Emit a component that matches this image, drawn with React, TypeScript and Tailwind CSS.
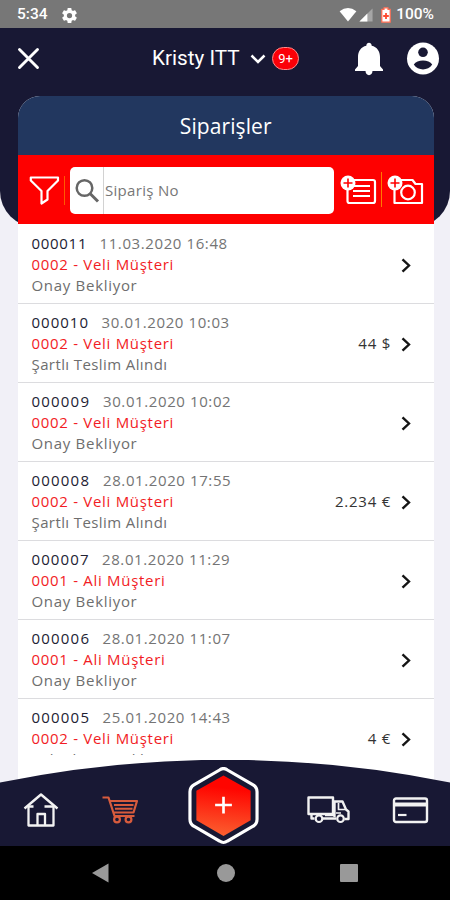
import type { ReactNode } from 'react';

interface Order {
    id: string;
    idClass: string;
    date: string;
    customer: string;
    status: string;
    statusClass: string;
    amount?: string;
}

const orders: Order[] = [
    {
        id: '000011',
        idClass: 'w-[68px] tracking-[0.7px]',
        date: '11.03.2020 16:48',
        customer: '0002 - Veli Müşteri',
        status: 'Onay Bekliyor',
        statusClass: 'tracking-[0.7px]'
    },
    {
        id: '000010',
        idClass: 'w-[70px] tracking-[1px]',
        date: '30.01.2020 10:03',
        customer: '0002 - Veli Müşteri',
        status: 'Şartlı Teslim Alındı',
        statusClass: 'tracking-[0.4px]',
        amount: '44 $'
    },
    {
        id: '000009',
        idClass: 'w-[71.5px] tracking-[1.2px]',
        date: '30.01.2020 10:02',
        customer: '0002 - Veli Müşteri',
        status: 'Onay Bekliyor',
        statusClass: 'tracking-[0.7px]'
    },
    {
        id: '000008',
        idClass: 'w-[71.5px] tracking-[1.2px]',
        date: '28.01.2020 17:55',
        customer: '0002 - Veli Müşteri',
        status: 'Şartlı Teslim Alındı',
        statusClass: 'tracking-[0.4px]',
        amount: '2.234 €'
    },
    {
        id: '000007',
        idClass: 'w-[70.5px] tracking-[1.1px]',
        date: '28.01.2020 11:29',
        customer: '0001 - Ali Müşteri',
        status: 'Onay Bekliyor',
        statusClass: 'tracking-[0.7px]'
    },
    {
        id: '000006',
        idClass: 'w-[71px] tracking-[1.2px]',
        date: '28.01.2020 11:07',
        customer: '0001 - Ali Müşteri',
        status: 'Onay Bekliyor',
        statusClass: 'tracking-[0.7px]'
    },
    {
        id: '000005',
        idClass: 'w-[71px] tracking-[1.2px]',
        date: '25.01.2020 14:43',
        customer: '0002 - Veli Müşteri',
        status: 'Paketleme Bekliyor',
        statusClass: 'tracking-[0.4px]',
        amount: '4 €'
    }
];

function StatusBar() {
    return (
        <div className="flex h-7 shrink-0 items-center justify-between bg-[#777777] pl-[17px] pr-4 font-['Roboto',sans-serif] text-[15.5px] font-medium text-white">
            <div className="flex items-center gap-[14px] pt-[2px]">
                <span>5:34</span>
                <svg className="h-[15px] w-[15px]" viewBox="2 2 20 20" fill="currentColor">
                    <path d="M19.43 12.98c.04-.32.07-.64.07-.98s-.03-.66-.07-.98l2.11-1.65c.19-.15.24-.42.12-.64l-2-3.46c-.12-.22-.39-.3-.61-.22l-2.49 1c-.52-.4-1.08-.73-1.69-.98l-.38-2.65A.49.49 0 0 0 14 2h-4c-.25 0-.46.18-.49.42l-.38 2.65c-.61.25-1.17.59-1.69.98l-2.49-1c-.23-.09-.49 0-.61.22l-2 3.46c-.13.22-.07.49.12.64l2.11 1.65c-.04.32-.07.65-.07.98s.03.66.07.98l-2.11 1.65c-.19.15-.24.42-.12.64l2 3.46c.12.22.39.3.61.22l2.49-1c.52.4 1.08.73 1.69.98l.38 2.65c.03.24.24.42.49.42h4c.25 0 .46-.18.49-.42l.38-2.65c.61-.25 1.17-.59 1.69-.98l2.49 1c.23.09.49 0 .61-.22l2-3.46c.12-.22.07-.49-.12-.64l-2.11-1.65zM12 15.5a3.5 3.5 0 1 1 0-7 3.5 3.5 0 0 1 0 7z" />
                </svg>
            </div>
            <div className="flex items-center pt-[2px]">
                <svg className="h-[14px] w-[18px]" viewBox="0 0 18 15" fill="currentColor">
                    <path d="M0 3.5Q9-3.3 18 3.5L9 14.5Z" />
                </svg>
                <svg className="ml-[2px] h-[14px] w-[14px]" viewBox="0 0 15 15" fill="currentColor">
                    <path d="M14.5.5V14.5H.5Z" opacity=".35" />
                    <path d="M9 6V14.5H.5Z" />
                </svg>
                <svg className="ml-[8px] h-4 w-[10px]" viewBox="0 0 10 16">
                    <path d="M3 .8h4v1.5h2.2v12.9H.8V2.3H3Z" fill="#fff" stroke="#ff6b51" strokeWidth="1.2" />
                    <path d="M5 6v6M2.2 9h5.6" stroke="#ff4a30" strokeWidth="1.8" />
                </svg>
                <span className="ml-[5px]">100%</span>
            </div>
        </div>
    );
}

function TopBar() {
    return (
        <div className="flex h-[68px] items-start pl-[17px] pr-[10px] pt-[14px] text-white">
            <svg className="mt-[5px] h-[23px] w-[23px]" viewBox="0 0 23 23" fill="none" stroke="currentColor" strokeWidth="2.9" strokeLinecap="round">
                <path d="M2.5 2.5l18 18M20.5 2.5l-18 18" />
            </svg>
            <div className="ml-[112px] mt-[2px] flex h-[29px] items-center">
                <span className="w-[91px] whitespace-nowrap pt-px font-['Roboto',sans-serif] text-[20.7px]">
                    Kristy ITT
                </span>
                <svg className="ml-[7px] h-[10px] w-4" viewBox="0 0 16 10" fill="none" stroke="currentColor" strokeWidth="2.5">
                    <path d="M1.5 1.5L8 8l6.5-6.5" />
                </svg>
                <span className="ml-[6px] flex h-[23px] w-[27px] items-center justify-center rounded-full border border-[#ff8a8a] bg-[#fb0007] font-['Roboto',sans-serif] text-[13px]">
                    9+
                </span>
            </div>
            <svg className="ml-auto h-[34px] w-[30px]" viewBox="0 0 30 34" fill="currentColor">
                <path d="M12.3 3.7C12.3-.2 17.7-.2 17.7 3.7 23 5 26 9 26 15v9l3 3.5v1.5H1v-1.5L4 24v-9C4 9 7 5 12.3 3.7ZM11.5 29h7c0 5.500-7 5.500-7 0Z" />
            </svg>
            <svg className="ml-[22px] h-[34px] w-[34px]" viewBox="0 0 34 34">
                <circle cx="17" cy="16.5" r="16" fill="#fff" />
                <circle cx="17" cy="10.3" r="4.8" fill="#181834" />
                <path d="M7.8 22.5C11 17 23 17 26.2 22.5 22 29 12 29 7.8 22.5Z" fill="#181834" />
            </svg>
        </div>
    );
}

function PlusDot() {
    return (
        <g>
            <circle cx="8" cy="8" r="7.5" fill="#fff" stroke="none" />
            <path d="M8 3.5v9M3.5 8h9" stroke="#f00" strokeWidth="1.6" />
        </g>
    );
}

function SearchBar() {
    return (
        <div className="flex h-[69px] shrink-0 items-start bg-[#fe0000] pl-[11px] pt-3">
            <svg className="mt-[8px] h-[31px] w-[31px]" viewBox="0 0 31 31" fill="none" stroke="#fff" strokeWidth="2.2" strokeLinejoin="round">
                <path d="M1.8 2.5H29v3L18.5 16v8.5l-6 4V16L1.8 5.5Z" />
            </svg>
            <div className="ml-[4px] mt-[9px] h-[29px] w-[1.5px] bg-[#ff5a00]" />
            <div className="ml-[5px] flex h-[47px] w-[264px] items-center rounded-[5px] bg-white">
                <div className="flex h-full w-[34px] items-center justify-center border-r border-[#d2d2d2]">
                    <svg className="h-[26px] w-[26px]" viewBox="0 0 26 26" fill="none" stroke="#666" strokeWidth="2.5">
                        <circle cx="10.5" cy="10" r="7.8" />
                        <path d="M16 15.5l8 8" strokeWidth="3" />
                    </svg>
                </div>
                <span className="pl-px text-[15px] tracking-[0.3px] text-[#777]">
                    Sipariş No
                </span>
            </div>
            <svg className="ml-[6px] mt-[8px] h-[30px] w-[37px]" viewBox="0 0 37 30" fill="none" stroke="#fff">
                <rect x="7.5" y="5" width="27.5" height="23" rx="2" strokeWidth="2.2" />
                <path d="M14 11h16M13 16h17M13 21h17" strokeWidth="2" />
                <PlusDot />
            </svg>
            <div className="ml-[4px] mt-[5px] h-[35px] w-px bg-[#ff7a00]" />
            <svg className="ml-[5px] mt-[8px] h-[30px] w-[37px]" viewBox="0 0 37 30" fill="none" stroke="#fff">
                <path d="M7.5 28V5h18l3 4h6.5v19Z" strokeWidth="2.2" strokeLinejoin="round" />
                <circle cx="21" cy="17.5" r="6.8" strokeWidth="2.2" />
                <PlusDot />
            </svg>
        </div>
    );
}

function OrderRow({ order }: { order: Order }) {
    return (
        <li className="flex h-[79.1px] shrink-0 items-start justify-between border-b border-[#dcdcdf] pl-[14px] pr-[23px] pt-[8px] text-[15px] leading-[21px]">
            <div className="whitespace-nowrap">
                <p className="flex">
                    <span className={`font-medium text-[#222233] ${order.idClass}`}>{order.id}</span>
                    <span className="tracking-[0.6px] text-[#747474]">{order.date}</span>
                </p>
                <p className="font-medium tracking-[0.7px] text-[#f21c25]">{order.customer}</p>
                <p className={`text-[#6e6e6e] ${order.statusClass}`}>{order.status}</p>
            </div>
            <div className="flex h-[42px] items-end text-[#333]">
                <span className="tracking-[0.75px]">{order.amount}</span>
                <svg className="mb-[2px] ml-[10px] h-[15px] w-[10px]" viewBox="0 0 10 15" fill="none" stroke="#151515" strokeWidth="2.4">
                    <path d="M1.5 1.3L8 7.5 1.5 13.7" />
                </svg>
            </div>
        </li>
    );
}

function NavIcon({ className, viewBox, children }: { className: string; viewBox: string; children: ReactNode }) {
    return (
        <svg className={className} viewBox={viewBox} fill="none" stroke="#f2f2f2" strokeWidth="2.2" strokeLinejoin="round">
            {children}
        </svg>
    );
}

function BottomNav() {
    return (
        <nav className="absolute inset-x-0 bottom-0 h-[86px]">
            {/* Curved background */}
            <svg className="absolute inset-0 h-full w-full" viewBox="0 0 450 86" preserveAspectRatio="none">
                <path d="M0 22.5Q225-23 450 22.5V86H0Z" fill="#181834" />
            </svg>
            <div className="relative flex h-full items-start pl-[23px] pt-[7px]">
                <NavIcon className="mt-[25px] h-[36px] w-[36px]" viewBox="0 0 36 36">
                    <path d="M1.5 16.5L18 2.5l16.5 14" strokeWidth="2.4" />
                    <path d="M5.5 14v19.5h25V14M14.5 33V22H22v11M5.5 14.5h5M30.5 14.500h-9" strokeWidth="2.3" />
                </NavIcon>
                <NavIcon className="ml-[43px] mt-[28px] h-[29px] w-[37px]" viewBox="0 0 37 29">
                    <g stroke="#d75b3d">
                        <path d="M.5 2.500h6L12.500 21H32.500M8.500 6H35L31.500 17.500H12" />
                        <path d="M12 10h19.500M13 13.800h17.500" strokeWidth="1.9" />
                        <circle cx="15" cy="24.5" r="2.9" />
                        <circle cx="26.500" cy="24.5" r="2.9" />
                    </g>
                </NavIcon>
                <svg className="ml-[48px] h-[79px] w-[73px]" viewBox="0 0 74 80">
                    <defs>
                        <linearGradient id="hexFill" x1="0.5" y1="0" x2="0.4" y2="1">
                            <stop offset="0.2" stopColor="#ff0500" />
                            <stop offset="1" stopColor="#fb6030" />
                        </linearGradient>
                    </defs>
                    <path d="M33 3Q37 0 41 3L67 18Q71 20.5 71 25V53Q71 58 67 60L41 75Q37 78 33 75L7 60Q3 58 3 53V25Q3 20.5 7 18Z" fill="#181834" stroke="#fff" strokeWidth="3.2" />
                    <path d="M37 8.5L64.5 24V54L37 70 9.5 54V24Z" fill="url(#hexFill)" />
                    <path d="M37 30v17M28.5 38.5h17" stroke="#fff" strokeWidth="2.7" />
                </svg>
                <NavIcon className="ml-[47px] mt-[28px] h-[29px] w-[43px]" viewBox="0 0 43 29">
                    <path d="M1.5 2.5H26V19H1.5ZM26 6.5h9.500l3.500 8 2.500 2V24h-4M4.500 19v4.500h3M16 23.500h13M27.500 7v15" strokeWidth="2.4" />
                    <path d="M31.500 8v6.500H38M29 18h5M18 20.500h9" strokeWidth="1.7" />
                    <circle cx="12" cy="23.7" r="3.3" fill="#181834" />
                    <circle cx="33.5" cy="23.7" r="3.3" fill="#181834" />
                </NavIcon>
                <NavIcon className="ml-[42px] mt-[30px] h-[27px] w-[37px]" viewBox="0 0 37 27">
                    <rect x="2" y="1.5" width="33" height="23.5" rx="2" strokeWidth="2.4" />
                    <path d="M2 7.5h33" strokeWidth="4.2" />
                    <path d="M6 18h8.5" />
                </NavIcon>
            </div>
        </nav>
    );
}

function SystemNav() {
    return (
        <div className="flex h-[54px] shrink-0 items-center bg-black pl-[91px]">
            <svg className="h-5 w-[18px]" viewBox="0 0 18 20" fill="#999">
                <path d="M1 10L17.5.5V19.5Z" />
            </svg>
            <div className="ml-[108px] h-[18px] w-[18px] rounded-full bg-[#999]" />
            <div className="ml-[105px] h-[18px] w-[18px] rounded-[1px] bg-[#999]" />
        </div>
    );
}

export default function App() {
    return (
        <div className="flex h-[900px] w-[450px] flex-col overflow-hidden bg-[#f1f0f7] font-['Open_Sans',sans-serif]">
            <StatusBar />

            <div className="relative flex min-h-0 flex-1 flex-col">
                <header className="h-[199px] shrink-0 rounded-b-[36px] bg-[#181834]">
                    <TopBar />
                </header>

                {/* Order list, starts on top of the header */}
                <main className="relative -mt-[131px] ml-[17.5px] mr-4 flex min-h-0 flex-1 flex-col overflow-hidden rounded-t-[22px] bg-white">
                    <h1 className="flex h-[59px] shrink-0 items-center justify-center bg-[#22375f] pt-[2px] text-[21px] font-medium tracking-[0.1px] text-white">
                        Siparişler
                    </h1>
                    <SearchBar />
                    <ul className="mb-[91px] flex min-h-0 flex-1 flex-col overflow-hidden pt-[0.6px]">
                        {orders.map((order) => (
                            <OrderRow key={order.id} order={order} />
                        ))}
                    </ul>
                </main>

                <BottomNav />
            </div>

            <SystemNav />
        </div>
    );
}
